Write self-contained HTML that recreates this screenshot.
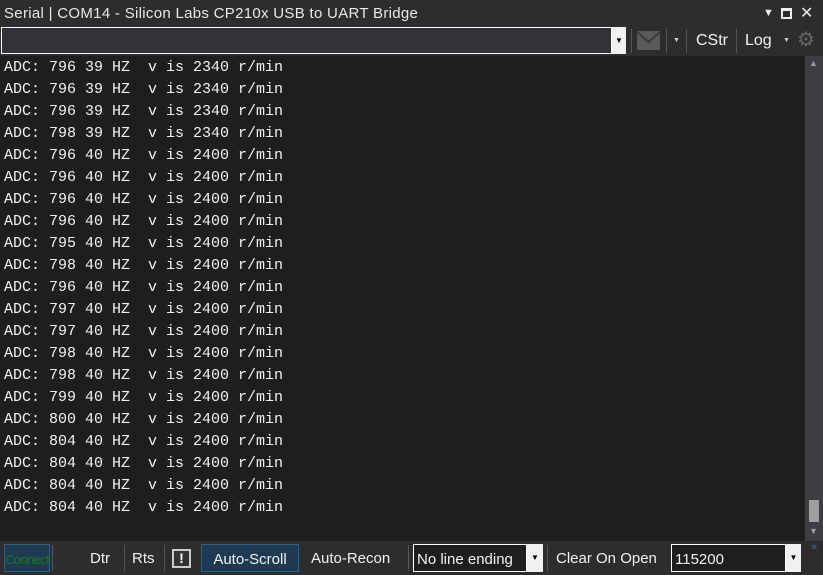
<!DOCTYPE html>
<html><head><style>
*{margin:0;padding:0;box-sizing:border-box}
body{width:823px;height:575px;background:#1e1e1e;font-family:"Liberation Sans","Noto Sans CJK SC",sans-serif;color:#f1f1f1;position:relative;overflow:hidden}
.abs{position:absolute}
#title{left:0;top:0;width:823px;height:27px;background:#2d2d30;font-size:15px;line-height:27px;padding-left:4px;color:#e8e8e8;letter-spacing:0.3px}
#tb{left:0;top:27px;width:823px;height:29px;background:#2d2d30}
#out{left:0;top:56px;width:805px;height:485px;background:#1e1e1e;font-family:"Liberation Mono",monospace;font-size:15px;line-height:22px;color:#f1f1f1;padding:1px 0 0 4px;white-space:pre}
#sb{left:805px;top:56px;width:18px;height:485px;background:#3e3e42}
#bot{left:0;top:541px;width:823px;height:34px;background:#2d2d30;font-size:15px}
.b{position:absolute;top:3px;height:28px;line-height:30px;color:#f1f1f1}
.sep{position:absolute;top:4px;width:1px;height:26px;background:#555}
</style></head><body>
<div id="title" class="abs">Serial | COM14 - Silicon Labs CP210x USB to UART Bridge
<span class="abs" style="left:763px;top:0;font-size:11px">▼</span>
<span class="abs" style="left:781px;top:8px;width:11px;height:11px;border:2px solid #eee;border-top-width:3px"></span>
<span class="abs" style="left:800px;top:0;font-size:16px">✕</span>
</div>
<div id="tb" class="abs">
<div class="abs" style="left:1px;top:0;width:611px;height:27px;background:#333337;border:1px solid #fff"></div>
<div class="abs" style="left:612px;top:0;width:14px;height:27px;background:#f1f1f1;color:#000;font-size:8px;line-height:27px;text-align:center">▼</div>
<div class="abs" style="left:631px;top:2px;width:1px;height:24px;background:#555"></div>
<svg class="abs" style="left:637px;top:4px" width="23" height="19"><rect x="0" y="0" width="23" height="19" fill="#5a5a5a"/><path d="M0 1 L11.5 11 L23 1" stroke="#3a3a3a" stroke-width="2" fill="none"/></svg>
<div class="abs" style="left:666px;top:2px;width:1px;height:24px;background:#555"></div>
<div class="abs" style="left:673px;top:0;font-size:7px;line-height:27px;color:#ccc">▼</div>
<div class="abs" style="left:686px;top:2px;width:1px;height:24px;background:#555"></div>
<div class="abs" style="left:696px;top:0;font-size:16px;line-height:27px">CStr</div>
<div class="abs" style="left:736px;top:2px;width:1px;height:24px;background:#555"></div>
<div class="abs" style="left:745px;top:0;font-size:16px;line-height:27px">Log</div>
<div class="abs" style="left:783px;top:0;font-size:7px;line-height:27px;color:#ccc">▼</div>
<div class="abs" style="left:797px;top:0;font-size:20px;line-height:27px;color:#666">⚙</div>
</div>
<div id="out" class="abs">ADC: 796 39 HZ  v is 2340 r/min
ADC: 796 39 HZ  v is 2340 r/min
ADC: 796 39 HZ  v is 2340 r/min
ADC: 798 39 HZ  v is 2340 r/min
ADC: 796 40 HZ  v is 2400 r/min
ADC: 796 40 HZ  v is 2400 r/min
ADC: 796 40 HZ  v is 2400 r/min
ADC: 796 40 HZ  v is 2400 r/min
ADC: 795 40 HZ  v is 2400 r/min
ADC: 798 40 HZ  v is 2400 r/min
ADC: 796 40 HZ  v is 2400 r/min
ADC: 797 40 HZ  v is 2400 r/min
ADC: 797 40 HZ  v is 2400 r/min
ADC: 798 40 HZ  v is 2400 r/min
ADC: 798 40 HZ  v is 2400 r/min
ADC: 799 40 HZ  v is 2400 r/min
ADC: 800 40 HZ  v is 2400 r/min
ADC: 804 40 HZ  v is 2400 r/min
ADC: 804 40 HZ  v is 2400 r/min
ADC: 804 40 HZ  v is 2400 r/min
ADC: 804 40 HZ  v is 2400 r/min</div>
<div id="sb" class="abs">
<div class="abs" style="left:4px;top:2px;font-size:9px;color:#999">▲</div>
<div class="abs" style="left:4px;top:444px;width:10px;height:22px;background:#9e9e9e"></div>
<div class="abs" style="left:4px;top:470px;font-size:9px;color:#999">▼</div>
</div>
<div id="bot" class="abs">
<div class="b" style="left:4px;width:46px;background:#1e3a52;border:1px solid #2e5f85;color:#1a7a1a;text-align:center;font-size:13px;letter-spacing:-0.6px;overflow:hidden;white-space:nowrap">Connect</div>
<div class="sep" style="left:52px"></div>
<div class="b" style="left:90px">Dtr</div>
<div class="sep" style="left:124px"></div>
<div class="b" style="left:132px">Rts</div>
<div class="sep" style="left:164px"></div>
<div class="abs" style="left:172px;top:8px;width:19px;height:19px;border:2px solid #ccc;background:#333;color:#fff;font-weight:bold;font-size:14px;line-height:15px;text-align:center">!</div>
<div class="b" style="left:201px;width:98px;background:#1e3a52;border:1px solid #2e5f85;text-align:center">Auto-Scroll</div>
<div class="b" style="left:311px">Auto-Recon</div>
<div class="sep" style="left:408px"></div>
<div class="b" style="left:413px;width:114px;border:1px solid #fff;background:#1e1e1e;padding-left:3px;overflow:hidden;white-space:nowrap">No line ending</div>
<div class="abs" style="left:527px;top:3px;width:16px;height:28px;background:#f1f1f1;color:#000;font-size:8px;line-height:28px;text-align:center">▼</div>
<div class="sep" style="left:547px"></div>
<div class="b" style="left:556px">Clear On Open</div>
<div class="b" style="left:671px;width:115px;border:1px solid #fff;background:#1e1e1e;padding-left:3px">115200</div>
<div class="abs" style="left:786px;top:3px;width:15px;height:28px;background:#f1f1f1;color:#000;font-size:8px;line-height:28px;text-align:center">▼</div>
<div class="abs" style="left:811px;top:0;font-size:11px;color:#4a6a9a">»</div>
</div>
</body></html>
